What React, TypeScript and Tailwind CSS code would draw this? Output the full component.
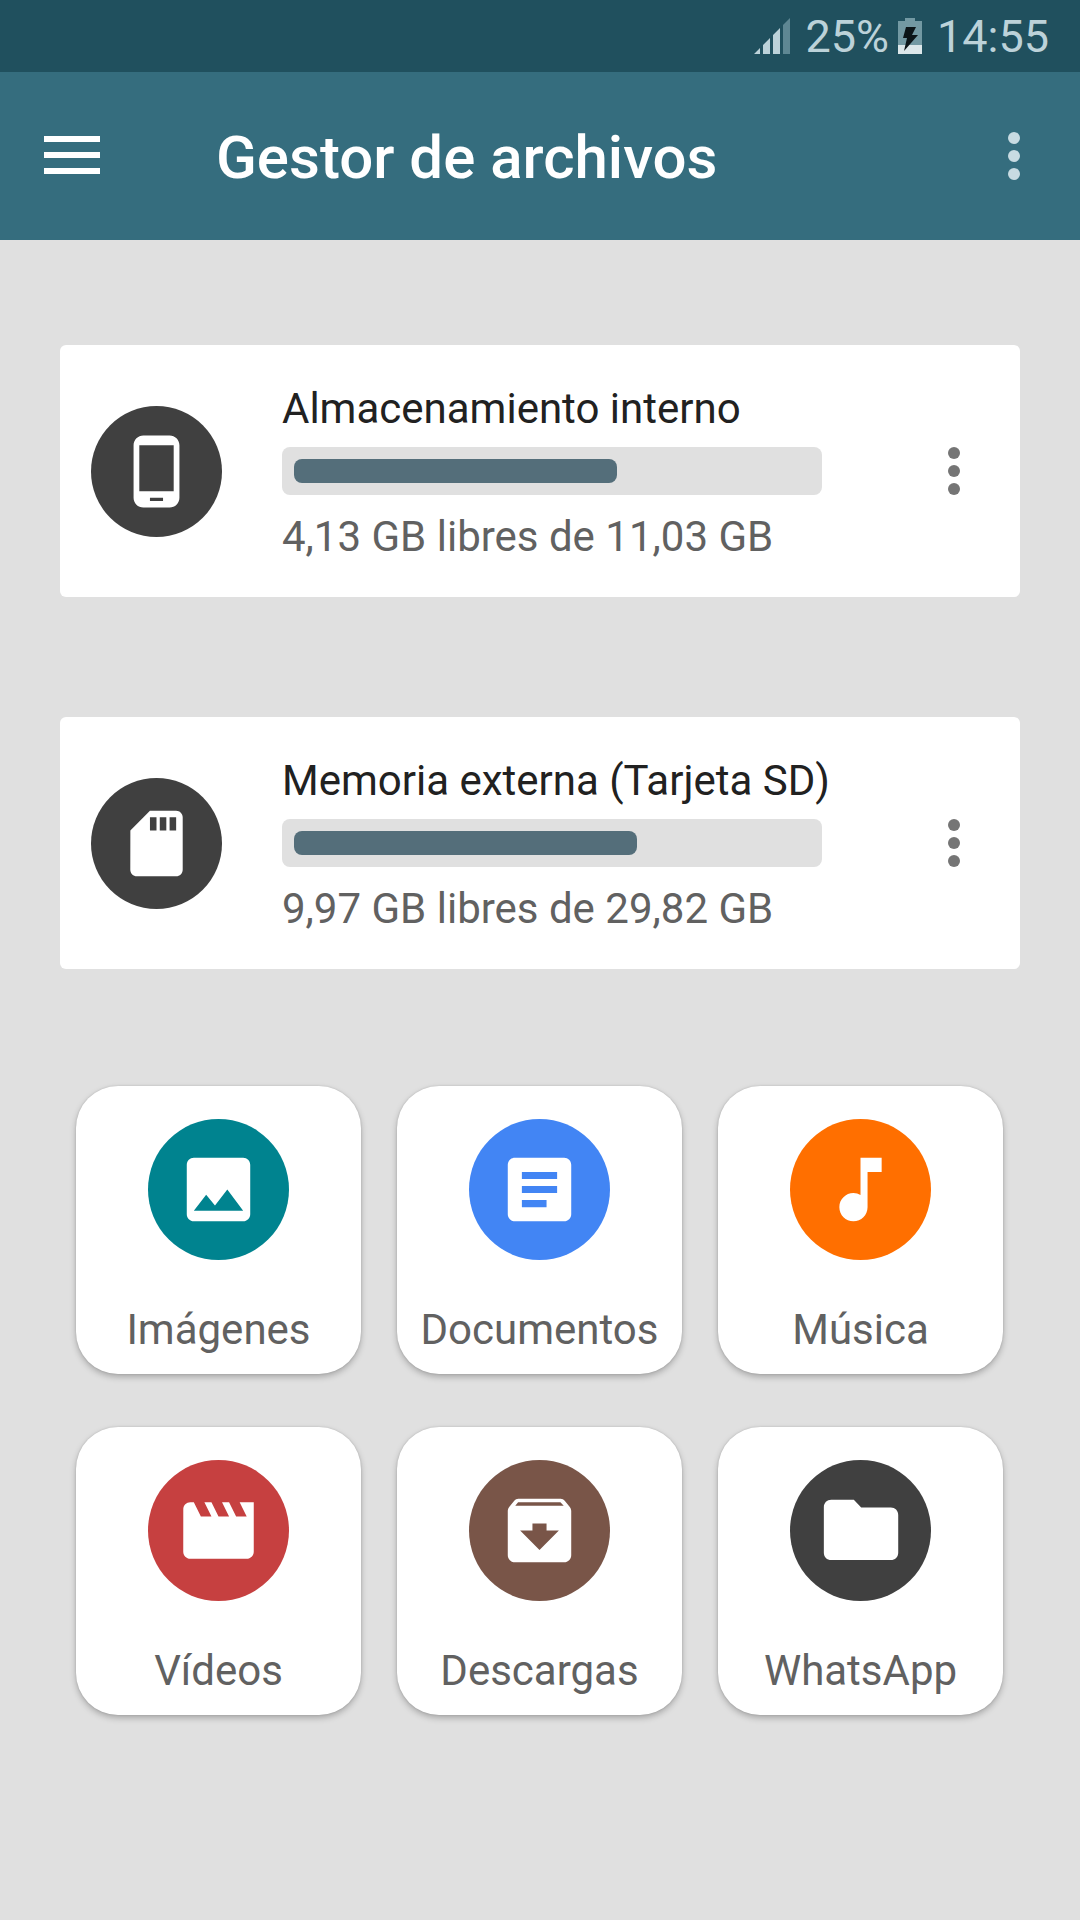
import React from 'react';

const volumes = [
    { id: 'internal', name: 'Almacenamiento interno', free: 4.13, total: 11.03, icon: 'phone' },
    { id: 'sd', name: 'Memoria externa (Tarjeta SD)', free: 9.97, total: 29.82, icon: 'sd' },
];

const categories = [
    { label: 'Imágenes', icon: 'image', color: 'fill-[#00838f]' },
    { label: 'Documentos', icon: 'article', color: 'fill-[#4285f4]' },
    { label: 'Música', icon: 'music', color: 'fill-[#ff6f00]' },
    { label: 'Vídeos', icon: 'movie', color: 'fill-[#c64040]' },
    { label: 'Descargas', icon: 'archive', color: 'fill-[#795548]' },
    { label: 'WhatsApp', icon: 'folder', color: 'fill-[#404040]' },
];

const paths: Record<string, string> = {
    phone: 'M16 1H8C6.34 1 5 2.34 5 4v16c0 1.66 1.34 3 3 3h8c1.66 0 3-1.34 3-3V4c0-1.66-1.34-3-3-3zm-2 20h-4v-1h4v1zm3.25-3H6.75V4h10.5v14z',
    sd: 'M18 2h-8L4.02 8 4 20c0 1.1.9 2 2 2h12c1.1 0 2-.9 2-2V4c0-1.1-.9-2-2-2zm-6 6h-2V4h2v4zm3 0h-2V4h2v4zm3 0h-2V4h2v4z',
    image: 'M21 19V5c0-1.1-.9-2-2-2H5c-1.1 0-2 .9-2 2v14c0 1.1.9 2 2 2h14c1.1 0 2-.9 2-2zM8.5 13.5l2.5 3.01L14.5 12l4.5 6H5l3.5-4.5z',
    article: 'M19 3H5c-1.1 0-2 .9-2 2v14c0 1.1.9 2 2 2h14c1.1 0 2-.9 2-2V5c0-1.1-.9-2-2-2zm-5 14H7v-2h7v2zm3-4H7v-2h10v2zm0-4H7V7h10v2z',
    music: 'M12 3v10.55c-.59-.34-1.27-.55-2-.55-2.21 0-4 1.79-4 4s1.79 4 4 4 4-1.79 4-4V7h4V3h-6z',
    movie: 'M18 4l2 4h-3l-2-4h-2l2 4h-3l-2-4H8l2 4H7L5 4H4c-1.1 0-1.99.9-1.99 2L2 18c0 1.1.9 2 2 2h16c1.1 0 2-.9 2-2V4h-4z',
    archive: 'M20.54 5.23l-1.39-1.68C18.88 3.21 18.47 3 18 3H6c-.47 0-.88.21-1.16.55L3.46 5.23C3.17 5.57 3 6.02 3 6.5V19c0 1.1.9 2 2 2h14c1.1 0 2-.9 2-2V6.5c0-.48-.17-.93-.46-1.27zM12 17.5L6.5 12H10v-2h4v2h3.5L12 17.5zM5.12 5l.81-1h12l.94 1H5.12z',
    folder: 'M10.1 3.3H3.7c-1.2 0-2.1.9-2.1 2.1v12.9c0 1.2.9 2.1 2.1 2.1h16.9c1.2 0 2.1-.9 2.1-2.1V7.6c0-1.2-.9-2.1-2.1-2.1h-8.4z',
};

const formatGb = (value: number) => `${value.toFixed(2).replace('.', ',')} GB`;

const RoundIcon = ({ icon, className }: { icon: string, className: string }) => (
    <svg viewBox="0 0 40 40" className={className} aria-hidden="true">
        <circle cx="20" cy="20" r="20" />
        <path transform="translate(8 8)" fill="#fff" d={paths[icon]} />
    </svg>
);

const MoreDots = ({ className }: { className: string }) => (
    <svg viewBox="0 0 12 48" className={className} aria-hidden="true">
        <circle cx="6" cy="6" r="6" />
        <circle cx="6" cy="24" r="6" />
        <circle cx="6" cy="42" r="6" />
    </svg>
);

const StatusBar = () => (
    <div className="flex h-18 items-center justify-end bg-[#20505e] pr-[31px] text-[45px] leading-none text-[#bcd2d9]">
        <svg viewBox="0 0 36 36" className="mr-[15px] size-9" aria-hidden="true">
            <path fill="#bcd2d9" d="M0 36l6-6v6zM9 27l7-7v16H9zM19 17l7-7v26h-7z" />
            <path fill="#5e8793" d="M29 7l7-7v36h-7z" />
        </svg>
        <span>25%</span>
        <svg viewBox="0 0 24 36" className="ml-[9px] mr-[15px] h-9 w-6" aria-hidden="true">
            <path fill="#7399a3" d="M7 0h10v3h7v24H0V3h7z" />
            <path fill="#dce7ea" d="M0 27h24v9H0z" />
            <path fill="#0c1518" d="M8 9h10l-4 8h6L6 33l3-13H5z" />
        </svg>
        <span>14:55</span>
    </div>
);

const VolumeCard = ({ name, free, total, icon }: { name: string, free: number, total: number, icon: string }) => {
    const used = ((total - free) / total) * 100;

    return (
        <section className="flex items-center rounded-md bg-white py-8 pr-[30px] pl-[31px]">
            <RoundIcon icon={icon} className="size-[131px] shrink-0 fill-[#404040]" />
            <div className="ml-15 min-w-0 flex-1 whitespace-nowrap">
                <h2 className="leading-16 text-[#212121]">{name}</h2>
                <div
                    role="progressbar"
                    aria-label={name}
                    aria-valuenow={Math.round(used)}
                    className="mt-1.5 rounded-lg bg-[#e0e0e0] p-3"
                >
                    <div className="h-6 rounded-lg bg-[#546e7a]" style={{ width: `${used}%` }}></div>
                </div>
                <p className="mt-3.5 leading-14 text-[#616161]">{formatGb(free)} libres de {formatGb(total)}</p>
            </div>
            <button aria-label={`Opciones de ${name}`} className="ml-24 flex h-24 w-18 shrink-0 items-center justify-center">
                <MoreDots className="h-12 w-3 fill-[#757575]" />
            </button>
        </section>
    );
};

const CategoryTile = ({ label, icon, color }: { label: string, icon: string, color: string }) => (
    <button className="flex h-72 flex-col items-center rounded-[42px] bg-white pt-[33px] shadow-[0_3px_6px_rgba(0,0,0,0.25),0_0_2px_rgba(0,0,0,0.15)]">
        <RoundIcon icon={icon} className={`size-[141px] ${color}`} />
        <span className="mt-[46px] leading-12 text-[#616161]">{label}</span>
    </button>
);

const App: React.FC = () => {
    return (
        <div className="min-h-screen bg-[#e0e0e0] font-[Roboto,sans-serif] text-[42px]">
            <StatusBar />
            <header className="flex h-42 items-center bg-[#356d7e] pr-15 pl-11">
                <button aria-label="Menú" className="flex w-14 flex-col gap-2.5 pb-0.5">
                    <span className="h-1.5 bg-white"></span>
                    <span className="h-1.5 bg-white"></span>
                    <span className="h-1.5 bg-white"></span>
                </button>
                <h1 className="ml-29 flex-1 pt-1 text-[60px] leading-18 font-medium text-white">Gestor de archivos</h1>
                <button aria-label="Más opciones">
                    <MoreDots className="h-12 w-3 fill-[#c8dbe2]" />
                </button>
            </header>

            <main className="pt-[105px] pb-20">
                <div className="flex flex-col gap-30 px-15">
                    {volumes.map((volume) => (
                        <VolumeCard key={volume.id} name={volume.name} free={volume.free} total={volume.total} icon={volume.icon} />
                    ))}
                </div>
                <nav className="mt-[117px] grid grid-cols-3 gap-x-9 gap-y-[53px] pr-[77px] pl-19">
                    {categories.map((category) => (
                        <CategoryTile key={category.label} label={category.label} icon={category.icon} color={category.color} />
                    ))}
                </nav>
            </main>
        </div>
    );
};

export default App;
